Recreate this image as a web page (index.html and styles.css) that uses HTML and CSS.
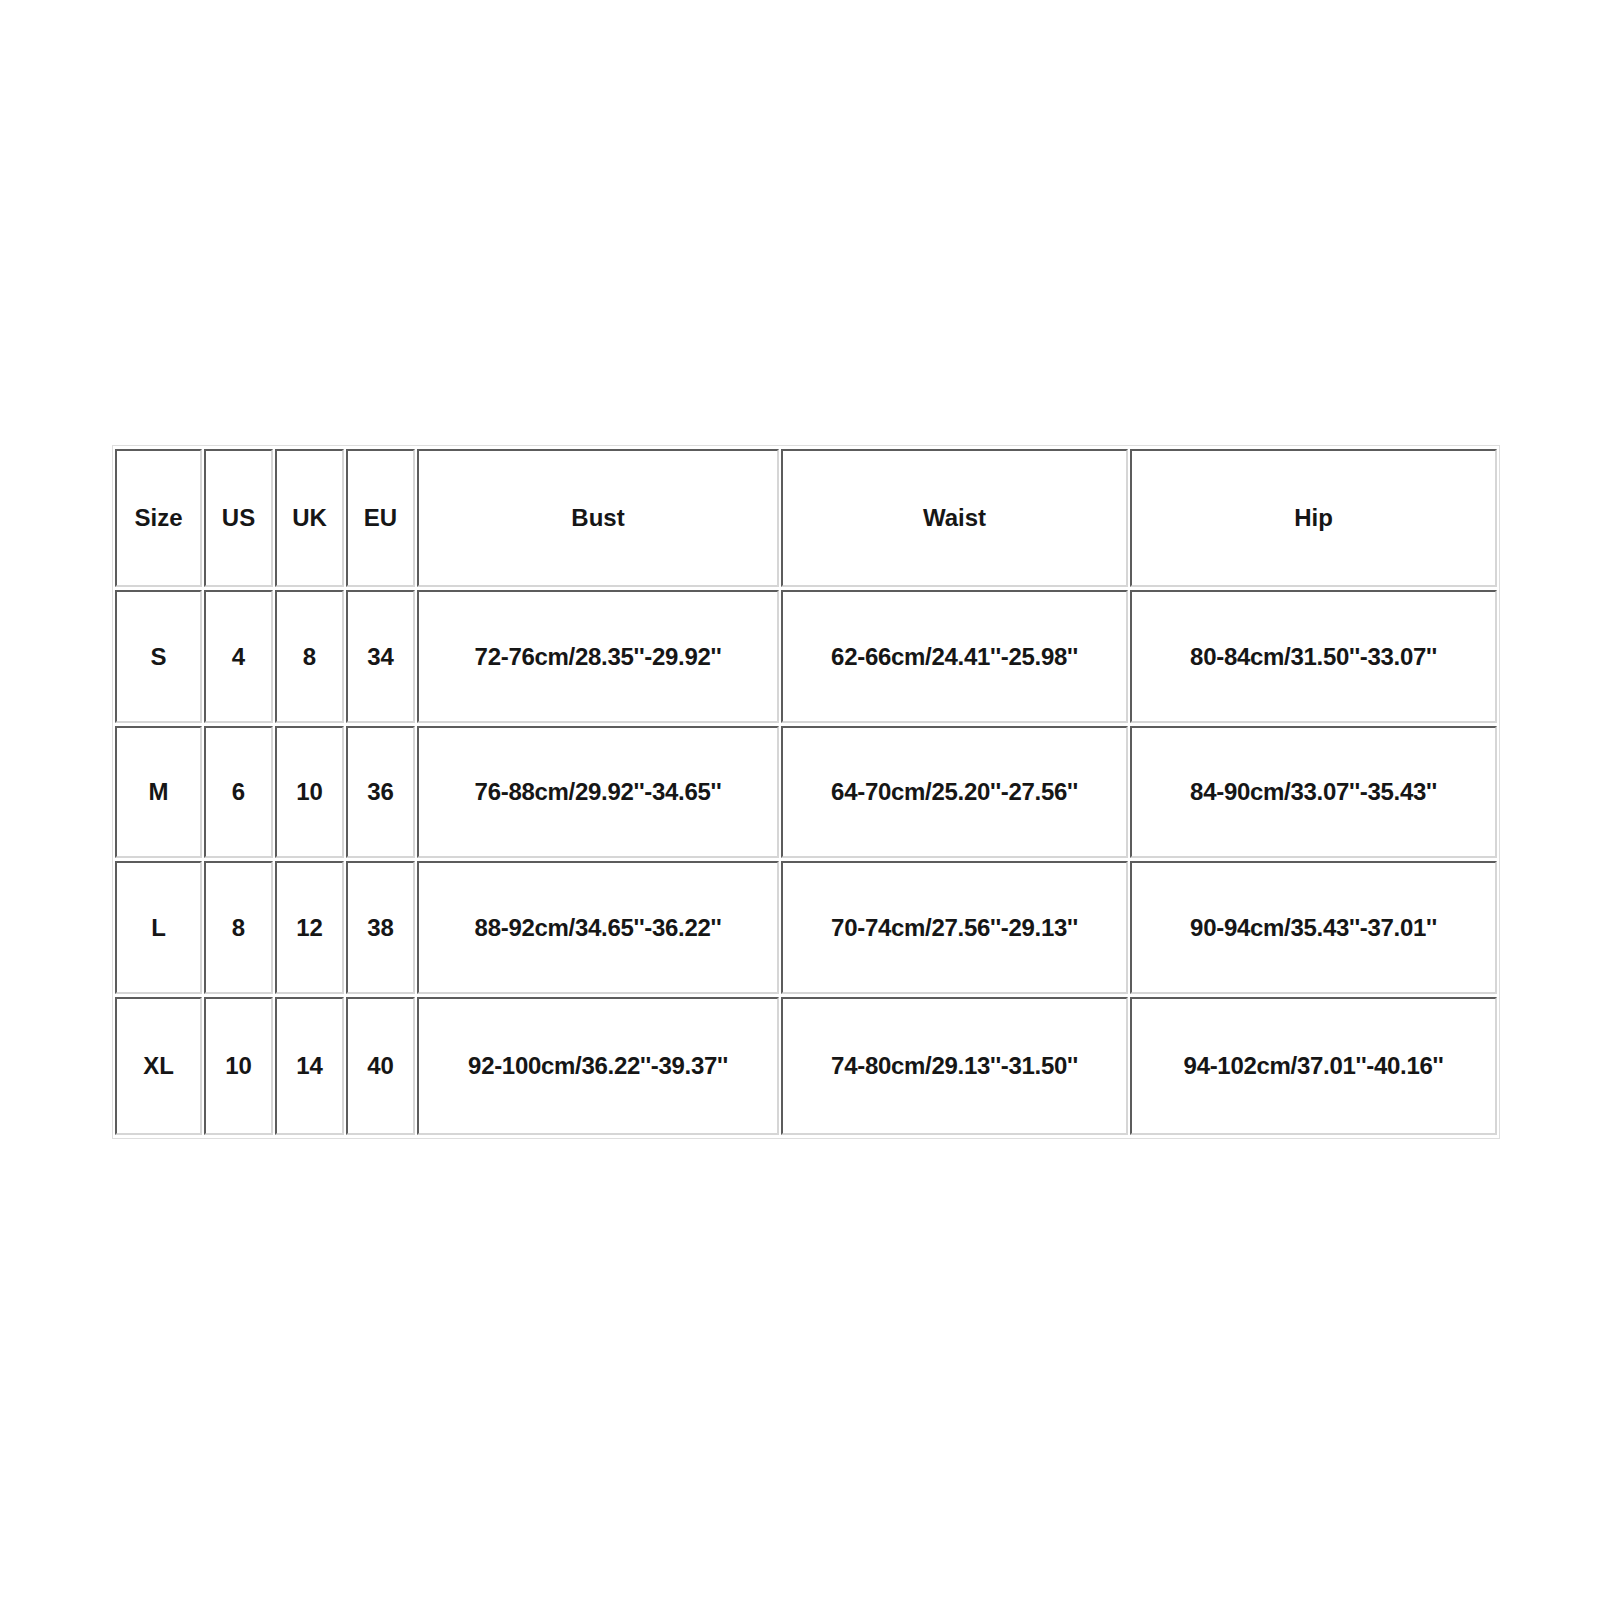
FILE: index.html
```html
<!DOCTYPE html>
<html>
<head>
<meta charset="utf-8">
<link rel="stylesheet" href="styles.css">
</head>
<body>
<table class="chart">
  <colgroup>
    <col class="c-size"><col class="c-num"><col class="c-num"><col class="c-num">
    <col class="c-bust"><col class="c-waist"><col class="c-hip">
  </colgroup>
  <thead>
    <tr class="head-row">
      <th>Size</th><th>US</th><th>UK</th><th>EU</th><th>Bust</th><th>Waist</th><th>Hip</th>
    </tr>
  </thead>
  <tbody>
    <tr>
      <td>S</td><td>4</td><td>8</td><td>34</td>
      <td class="m">72-76cm/28.35''-29.92''</td><td class="m">62-66cm/24.41''-25.98''</td><td class="m">80-84cm/31.50''-33.07''</td>
    </tr>
    <tr class="mid-row">
      <td>M</td><td>6</td><td>10</td><td>36</td>
      <td class="m">76-88cm/29.92''-34.65''</td><td class="m">64-70cm/25.20''-27.56''</td><td class="m">84-90cm/33.07''-35.43''</td>
    </tr>
    <tr>
      <td>L</td><td>8</td><td>12</td><td>38</td>
      <td class="m">88-92cm/34.65''-36.22''</td><td class="m">70-74cm/27.56''-29.13''</td><td class="m">90-94cm/35.43''-37.01''</td>
    </tr>
    <tr class="last-row">
      <td>XL</td><td>10</td><td>14</td><td>40</td>
      <td class="m">92-100cm/36.22''-39.37''</td><td class="m">74-80cm/29.13''-31.50''</td><td class="m">94-102cm/37.01''-40.16''</td>
    </tr>
  </tbody>
</table>
</body>
</html>
```

FILE: styles.css
```css
html, body {
  margin: 0;
  padding: 0;
  background: #ffffff;
}

body {
  padding: 445px 0 0 112px;
  font-family: "Liberation Sans", Arial, sans-serif;
}

.chart {
  table-layout: fixed;
  border-collapse: separate;
  border-spacing: 2px 3px;
  border: 1px solid #dedede;
  width: 1388px;
}

.c-size { width: 87px; }
.c-num { width: 69px; }
.c-bust { width: 362px; }
.c-waist { width: 347px; }
.c-hip { width: 367px; }

.chart th,
.chart td {
  box-sizing: border-box;
  padding: 0;
  border-top: 2px solid #5c5c5c;
  border-left: 2px solid #5c5c5c;
  border-bottom: 2px solid #d6d6d6;
  border-right: 2px solid #d6d6d6;
  text-align: center;
  vertical-align: middle;
  font-size: 24px;
  font-weight: bold;
  color: #161616;
  height: 133px;
}

.head-row th {
  height: 138px;
}

.mid-row td {
  height: 132px;
}

.last-row td {
  height: 138px;
}

.chart td.m {
  letter-spacing: -0.3px;
}
```
